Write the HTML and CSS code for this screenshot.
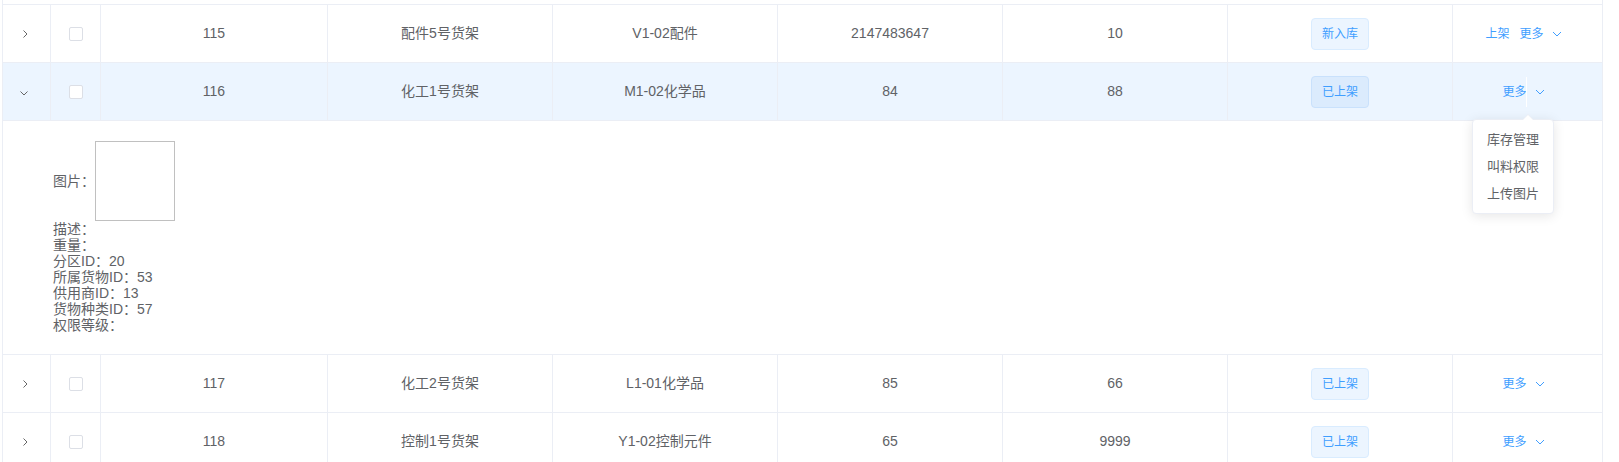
FILE: index.html
```html
<!DOCTYPE html>
<html lang="zh-CN">
<head>
<meta charset="utf-8">
<title>货架列表</title>
<link rel="stylesheet" href="styles.css">
</head>
<body>
<div class="table">
  <div class="spacer"></div>

  <div class="row">
    <div class="cell expand"><svg class="arrow" viewBox="0 0 12 12" width="12" height="12"><path d="M5.5 2.5 L9 6 L5.5 9.5"/></svg></div>
    <div class="cell sel"><span class="checkbox"></span></div>
    <div class="cell">115</div>
    <div class="cell">配件5号货架</div>
    <div class="cell">V1-02配件</div>
    <div class="cell">2147483647</div>
    <div class="cell">10</div>
    <div class="cell"><span class="tag">新入库</span></div>
    <div class="cell ops"><span class="link">上架</span><span class="link more">更多<svg class="down" viewBox="0 0 10 6" width="10" height="6"><path d="M1 1 L5 5 L9 1"/></svg></span></div>
  </div>

  <div class="row current">
    <div class="cell expand"><svg class="arrow open" viewBox="0 0 12 12" width="12" height="12"><path d="M5.5 2.5 L9 6 L5.5 9.5"/></svg></div>
    <div class="cell sel"><span class="checkbox"></span></div>
    <div class="cell">116</div>
    <div class="cell">化工1号货架</div>
    <div class="cell">M1-02化学品</div>
    <div class="cell">84</div>
    <div class="cell">88</div>
    <div class="cell"><span class="tag">已上架</span></div>
    <div class="cell ops"><span class="link more">更多<span class="caret"></span><svg class="down" viewBox="0 0 10 6" width="10" height="6"><path d="M1 1 L5 5 L9 1"/></svg></span></div>
  </div>

  <div class="expanded">
    <div class="pic-line"><span>图片：</span><span class="pic"></span></div>
    <div class="line">描述：</div>
    <div class="line">重量：</div>
    <div class="line">分区ID：20</div>
    <div class="line">所属货物ID：53</div>
    <div class="line">供用商ID：13</div>
    <div class="line">货物种类ID：57</div>
    <div class="line">权限等级：</div>
  </div>

  <div class="row">
    <div class="cell expand"><svg class="arrow" viewBox="0 0 12 12" width="12" height="12"><path d="M5.5 2.5 L9 6 L5.5 9.5"/></svg></div>
    <div class="cell sel"><span class="checkbox"></span></div>
    <div class="cell">117</div>
    <div class="cell">化工2号货架</div>
    <div class="cell">L1-01化学品</div>
    <div class="cell">85</div>
    <div class="cell">66</div>
    <div class="cell"><span class="tag">已上架</span></div>
    <div class="cell ops"><span class="link more">更多<svg class="down" viewBox="0 0 10 6" width="10" height="6"><path d="M1 1 L5 5 L9 1"/></svg></span></div>
  </div>

  <div class="row">
    <div class="cell expand"><svg class="arrow" viewBox="0 0 12 12" width="12" height="12"><path d="M5.5 2.5 L9 6 L5.5 9.5"/></svg></div>
    <div class="cell sel"><span class="checkbox"></span></div>
    <div class="cell">118</div>
    <div class="cell">控制1号货架</div>
    <div class="cell">Y1-02控制元件</div>
    <div class="cell">65</div>
    <div class="cell">9999</div>
    <div class="cell"><span class="tag">已上架</span></div>
    <div class="cell ops"><span class="link more">更多<svg class="down" viewBox="0 0 10 6" width="10" height="6"><path d="M1 1 L5 5 L9 1"/></svg></span></div>
  </div>

  <ul class="menu">
    <li>库存管理</li>
    <li>叫料权限</li>
    <li>上传图片</li>
  </ul>
</div>
</body>
</html>
```

FILE: styles.css
```css
* {
  box-sizing: border-box;
}

html,
body {
  margin: 0;
  padding: 0;
  overflow: hidden;
  background: #fff;
}

body {
  font-family: "Liberation Sans", "Noto Sans CJK SC", sans-serif;
  font-size: 14px;
  color: #606266;
}

.table {
  position: relative;
  margin-left: 2px;
  width: 1601px;
  height: 462px;
  border-left: 1px solid #ebeef5;
}

.spacer {
  height: 5px;
  border-bottom: 1px solid #ebeef5;
  border-right: 1px solid #ebeef5;
}

.row {
  display: grid;
  grid-template-columns: 48px 50px 227px repeat(5, 225px) 150px;
  height: 58px;
  border-bottom: 1px solid #ebeef5;
}

.row.current {
  background: #ecf5ff;
}

.cell {
  display: flex;
  align-items: center;
  justify-content: center;
  border-right: 1px solid #ebeef5;
  line-height: 23px;
  white-space: nowrap;
}

.arrow {
  margin-right: 6px;
  fill: none;
  stroke: #666;
  stroke-width: 1;
}

.arrow.open {
  transform: rotate(90deg);
}

.checkbox {
  display: block;
  width: 14px;
  height: 14px;
  margin-left: 1px;
  border: 1px solid #dcdfe6;
  border-radius: 2px;
  background: #fff;
}

.tag {
  display: inline-flex;
  align-items: center;
  height: 32px;
  padding: 0 10px;
  font-size: 12px;
  line-height: 30px;
  color: #409eff;
  background: #ecf5ff;
  border: 1px solid #d9ecff;
  border-radius: 4px;
}

.current .tag {
  background: #dbebfd;
  border-color: #c9e1fc;
}

.ops {
  padding-right: 8px;
  gap: 10px;
}

.link {
  display: inline-flex;
  align-items: center;
  font-size: 12px;
  line-height: 16px;
  color: #409eff;
}

.more {
  position: relative;
}

.down {
  margin-left: 8px;
  fill: none;
  stroke: #409eff;
  stroke-width: 1;
}

.caret {
  position: absolute;
  left: 24px;
  top: -7px;
  width: 1px;
  height: 30px;
  background: #ffffff;
}

.expanded {
  height: 234px;
  padding: 20px 50px 21px;
  border-bottom: 1px solid #ebeef5;
  border-right: 1px solid #ebeef5;
  line-height: 16px;
}

.pic-line {
  display: flex;
  align-items: center;
  height: 80px;
}

.pic {
  width: 80px;
  height: 80px;
  border: 1px solid #c0c0c0;
}

.line {
  height: 16px;
  white-space: nowrap;
}

.menu {
  position: absolute;
  left: 1469px;
  top: 119px;
  width: 82px;
  margin: 0;
  padding: 6px 0;
  list-style: none;
  background: #fff;
  border: 1px solid #ebeef5;
  border-radius: 4px;
  box-shadow: 0 2px 12px 0 rgba(0, 0, 0, 0.1);
}

.menu::before,
.menu::after {
  content: "";
  position: absolute;
  left: 49px;
  width: 0;
  height: 0;
  border: 6px solid transparent;
  border-top-width: 0;
}

.menu::before {
  top: -6px;
  border-bottom-color: #ebeef5;
}

.menu::after {
  top: -5px;
  border-bottom-color: #fff;
}

.menu li {
  padding: 0 14px;
  font-size: 13px;
  line-height: 27px;
  color: #606266;
  white-space: nowrap;
}
```
